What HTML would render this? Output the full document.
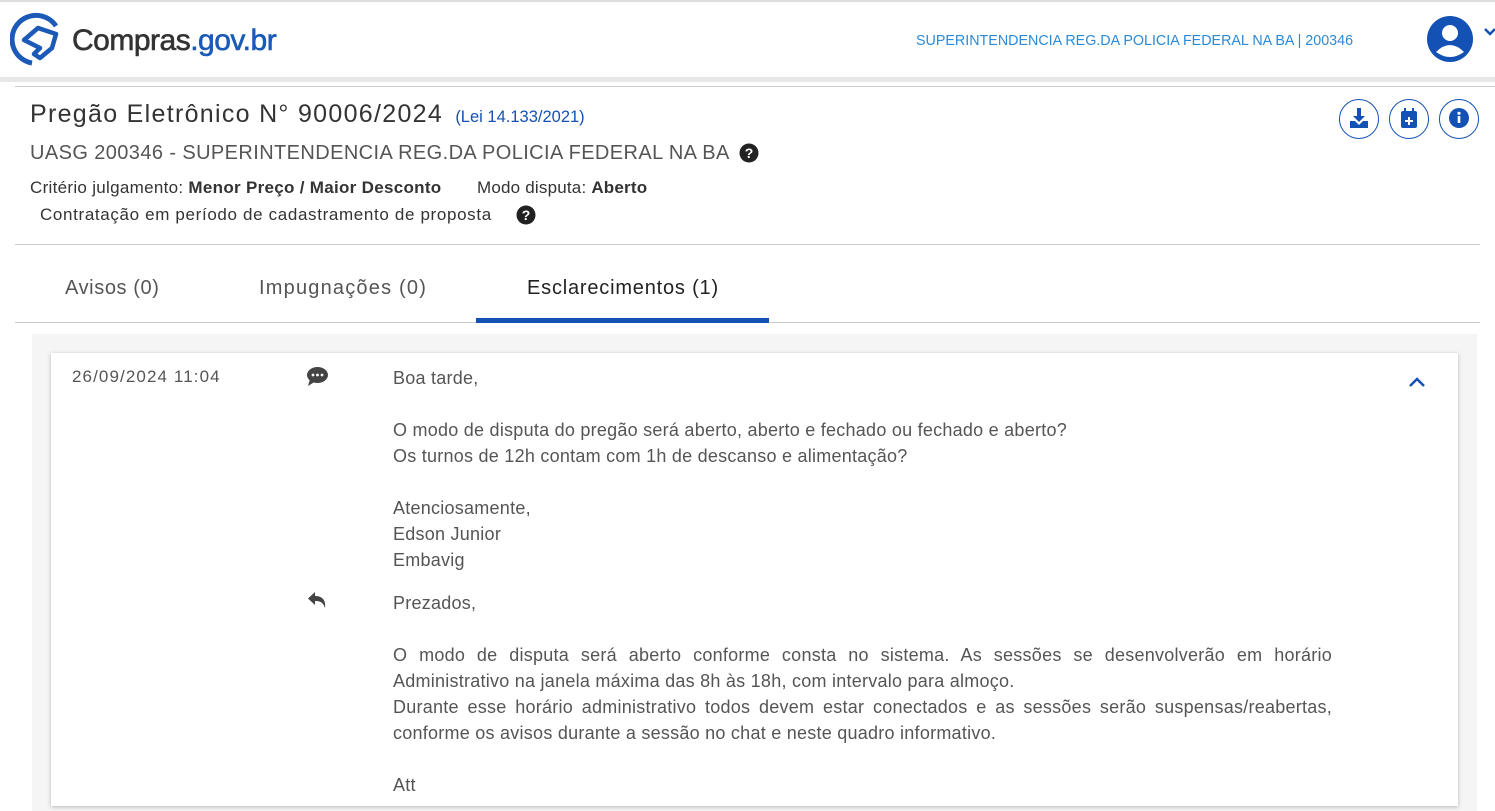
<!DOCTYPE html>
<html><head><meta charset="utf-8"><style>
*{margin:0;padding:0;box-sizing:border-box}
body{width:1495px;height:811px;overflow:hidden;background:#fff;font-family:"Liberation Sans",sans-serif;color:#333;position:relative}
.a{position:absolute;white-space:nowrap}
.t{font-size:18px;letter-spacing:0.25px;color:#555}
</style></head><body>
<div class="a" style="left:0;top:0;width:1495px;height:2px;background:#ddd"></div>
<div class="a" style="left:0;top:77px;width:1495px;height:5px;background:#e8e8e8"></div>
<div class="a" style="left:15px;top:86px;width:1480px;height:1px;background:#ccc"></div>
<svg class="a" style="left:10px;top:10px" width="58" height="58" viewBox="0 0 58 58">
<path d="M46 16 A24 24 0 1 0 22 53" fill="none" stroke="#1b5ab6" stroke-width="5"/>
<path d="M14 30 L28 18 L46 24 L42 38 L30 48 L24 44 L30 38 L22 34 Z" fill="none" stroke="#1b5ab6" stroke-width="4.5" stroke-linejoin="round"/>
</svg>
<div class="a" style="left:72px;top:24px;font-size:30px;letter-spacing:-0.5px;color:#333;-webkit-text-stroke:0.6px #333">Compras<span style="color:#1b5ab6;-webkit-text-stroke:0.6px #1b5ab6">.gov.br</span></div>
<div class="a" style="left:916px;top:33px;font-size:14.3px;color:#2a8ad8">SUPERINTENDENCIA REG.DA POLICIA FEDERAL NA BA | 200346</div>
<svg class="a" style="left:1427px;top:16px" width="46" height="46" viewBox="0 0 46 46"><circle cx="23" cy="23" r="23" fill="#1351b4"/><circle cx="23" cy="17" r="8" fill="#fff"/><path d="M9 36 Q23 22 37 36 Q23 46 9 36Z" fill="#fff"/></svg>
<svg class="a" style="left:1484px;top:27px" width="11" height="10"><path d="M1 2 L6 7 L11 2" fill="none" stroke="#1351b4" stroke-width="2.5"/></svg>
<div class="a" style="left:30px;top:100px;font-size:25px;letter-spacing:1.3px;color:#333">Pregão Eletrônico N° 90006/2024 <span style="font-size:16.5px;letter-spacing:0;color:#1351b4;margin-left:4px">(Lei 14.133/2021)</span></div>
<div class="a" style="left:30px;top:142px;font-size:20px;letter-spacing:0.4px;color:#555">UASG 200346 - SUPERINTENDENCIA REG.DA POLICIA FEDERAL NA BA</div>
<svg class="a" style="left:739px;top:143px" width="20" height="20"><circle cx="10" cy="10" r="9.5" fill="#222"/><text x="10" y="15" font-size="14" font-weight="bold" fill="#fff" text-anchor="middle" font-family="Liberation Sans">?</text></svg>
<div class="a" style="left:30px;top:178px;font-size:17px;letter-spacing:0.3px;color:#333">Critério julgamento: <b>Menor Preço / Maior Desconto</b></div>
<div class="a" style="left:477px;top:178px;font-size:17px;letter-spacing:0.2px;color:#333">Modo disputa: <b>Aberto</b></div>
<div class="a" style="left:40px;top:205px;font-size:17px;letter-spacing:0.65px;color:#333">Contratação em período de cadastramento de proposta</div>
<svg class="a" style="left:516px;top:205px" width="20" height="20"><circle cx="10" cy="10" r="9.5" fill="#222"/><text x="10" y="15" font-size="14" font-weight="bold" fill="#fff" text-anchor="middle" font-family="Liberation Sans">?</text></svg>
<div class="a" style="left:1339px;top:99px;width:40px;height:40px;border:1.5px solid #1351b4;border-radius:50%"></div>
<svg class="a" style="left:1349px;top:107px" width="20" height="22" viewBox="0 0 20 22"><path d="M8 1h4v8h4l-6 6-6-6h4z" fill="#1351b4"/><path d="M1 14h5l4 4 4-4h5v7H1z" fill="#1351b4"/></svg>
<div class="a" style="left:1389px;top:99px;width:40px;height:40px;border:1.5px solid #1351b4;border-radius:50%"></div>
<svg class="a" style="left:1400px;top:107px" width="18" height="22" viewBox="0 0 18 22"><rect x="4" y="1" width="2" height="4" fill="#1351b4"/><rect x="12" y="1" width="2" height="4" fill="#1351b4"/><rect x="1" y="4" width="16" height="17" rx="2" fill="#1351b4"/><path d="M8 10h2v3h3v2h-3v3H8v-3H5v-2h3z" fill="#fff"/></svg>
<div class="a" style="left:1439px;top:99px;width:40px;height:40px;border:1.5px solid #1351b4;border-radius:50%"></div>
<svg class="a" style="left:1449px;top:108px" width="20" height="20"><circle cx="10" cy="10" r="10" fill="#1351b4"/><rect x="8.7" y="8" width="2.6" height="7" fill="#fff"/><circle cx="10" cy="5.3" r="1.6" fill="#fff"/></svg>
<div class="a" style="left:15px;top:244px;width:1465px;height:1px;background:#ccc"></div>
<div class="a" style="left:65px;top:277px;font-size:20px;letter-spacing:0.6px;color:#555">Avisos (0)</div>
<div class="a" style="left:259px;top:277px;font-size:20px;letter-spacing:1.2px;color:#555">Impugnações (0)</div>
<div class="a" style="left:527px;top:277px;font-size:20px;letter-spacing:0.8px;color:#222">Esclarecimentos (1)</div>
<div class="a" style="left:15px;top:322px;width:1465px;height:1px;background:#ccc"></div>
<div class="a" style="left:476px;top:318px;width:293px;height:5px;background:#1351b4"></div>
<div class="a" style="left:32px;top:334px;width:1445px;height:477px;background:#f5f5f5"></div>
<div class="a" style="left:51px;top:353px;width:1407px;height:453px;background:#fff;box-shadow:0 1px 4px rgba(0,0,0,.25)"></div>
<div class="a t" style="left:72px;top:367px;font-size:17px;letter-spacing:1.1px">26/09/2024 11:04</div>
<svg class="a" style="left:307px;top:367px" width="21" height="19" viewBox="0 0 21 19"><ellipse cx="10.5" cy="8" rx="10.5" ry="8" fill="#444"/><path d="M3 12 L1 19 L9 14z" fill="#444"/><circle cx="6" cy="8" r="1.4" fill="#fff"/><circle cx="10.5" cy="8" r="1.4" fill="#fff"/><circle cx="15" cy="8" r="1.4" fill="#fff"/></svg>
<svg class="a" style="left:1408px;top:376px" width="18" height="12"><path d="M2 10 L9 3 L16 10" fill="none" stroke="#1351b4" stroke-width="2.5"/></svg>
<div class="a t" style="left:393px;top:365px;line-height:26px;white-space:normal;width:940px">Boa tarde,<br><br>O modo de disputa do pregão será aberto, aberto e fechado ou fechado e aberto?<br>Os turnos de 12h contam com 1h de descanso e alimentação?<br><br>Atenciosamente,<br>Edson Junior<br>Embavig</div>
<svg class="a" style="left:307px;top:591px" width="21" height="19" viewBox="0 0 21 19"><path d="M8 1 L1 7.5 L8 14 V10 C13 10 16 11 18 17 C19 10 16 5 8 5Z" fill="#444"/></svg>
<div class="a t" style="left:393px;top:590px;line-height:26px;white-space:normal;width:939px;text-align:justify">Prezados,<br><br>O modo de disputa será aberto conforme consta no sistema. As sessões se desenvolverão em horário Administrativo na janela máxima das 8h às 18h, com intervalo para almoço.<br>Durante esse horário administrativo todos devem estar conectados e as sessões serão suspensas/reabertas, conforme os avisos durante a sessão no chat e neste quadro informativo.<br><br>Att</div>
</body></html>
